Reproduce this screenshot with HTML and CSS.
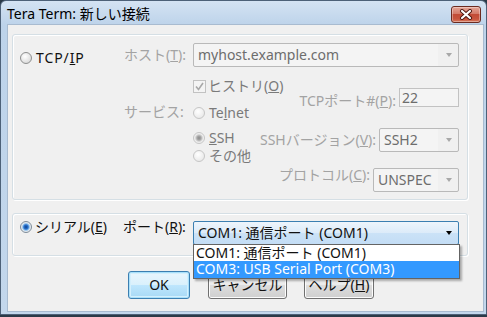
FILE: index.html
```html
<!DOCTYPE html>
<html lang="ja">
<head>
    <meta charset="UTF-8">
    <title>Tera Term: 新しい接続</title>
    <link rel="stylesheet" href="styles.css">
</head>
<body>
    <div class="window">
        <div class="titlebar">
            <span class="title">Tera Term: 新しい接続</span>
            <span class="close">
                <svg width="14" height="11" viewBox="0 0 14 11">
                    <path d="M3 2 L11 9 M11 2 L3 9" stroke="#4a1710" stroke-width="4" stroke-linecap="round"/>
                    <path d="M3 2 L11 9 M11 2 L3 9" stroke="#fff" stroke-width="2.2" stroke-linecap="round"/>
                </svg>
            </span>
        </div>

        <div class="client">
            <!-- TCP/IP -->
            <div class="group group-tcp">
                <div class="col-kind">
                    <label class="opt"><span class="radio"></span><span>TCP/<u>I</u>P</span></label>
                </div>
                <div class="col-labels">
                    <span class="lbl lbl-host">ホスト(<u>T</u>):</span>
                    <span class="lbl lbl-svc">サービス:</span>
                </div>
                <div class="col-fields">
                    <div class="combo combo-host">
                        <span>myhost.example.com</span>
                        <span class="arrow"></span>
                    </div>
                    <div class="svc-area">
                        <div class="svc-left">
                            <label class="opt dim row-hist">
                                <span class="check">
                                    <svg width="11" height="11" viewBox="0 0 11 11"><path d="M2 5.5 L4.5 8.5 L9 2" fill="none" stroke="#a8a8a8" stroke-width="1.6"/></svg>
                                </span><span>ヒストリ(<u>O</u>)</span>
                            </label>
                            <label class="opt dim row-telnet"><span class="radio off"></span><span>Te<u>l</u>net</span></label>
                            <label class="opt dim row-ssh"><span class="radio off on-gray"></span><span><u>S</u>SH</span></label>
                            <label class="opt dim row-other"><span class="radio off"></span><span>その他</span></label>
                        </div>
                        <div class="svc-right">
                            <div class="prow prow-port">
                                <span class="lbl">TCPポート#(<u>P</u>):</span>
                                <div class="field">22</div>
                            </div>
                            <div class="prow prow-ver">
                                <span class="lbl">SSHバージョン(<u>V</u>):</span>
                                <div class="combo combo-ver"><span>SSH2</span><span class="arrow"></span></div>
                            </div>
                            <div class="prow prow-proto">
                                <span class="lbl">プロトコル(<u>C</u>):</span>
                                <div class="combo combo-proto"><span>UNSPEC</span><span class="arrow"></span></div>
                            </div>
                        </div>
                    </div>
                </div>
            </div>

            <!-- シリアル -->
            <div class="group group-serial">
                <div class="serial-kind">
                    <label class="opt"><span class="radio on-blue"></span><span>シリアル(<u>E</u>)</span></label>
                </div>
                <span class="port-lbl">ポート(<u>R</u>):</span>
                <div class="combo combo-port">
                    <span>COM1: 通信ポート (COM1)</span>
                    <span class="arrow dark"></span>
                    <ul class="droplist">
                        <li>COM1: 通信ポート (COM1)</li>
                        <li class="sel">COM3: USB Serial Port (COM3)</li>
                    </ul>
                </div>
            </div>

            <div class="buttons">
                <button class="btn btn-ok">OK</button>
                <button class="btn btn-cancel">キャンセル</button>
                <button class="btn btn-help">ヘルプ(<u>H</u>)</button>
            </div>
        </div>
    </div>
</body>
</html>
```
FILE: styles.css
```css
/* general */
body {
    margin: 0;
    background: #2b3a48;
    font-family: "Noto Sans", "Noto Sans CJK JP", sans-serif;
    font-size: 14px;
    line-height: 16px;
    color: #111;
}

u {
    text-decoration: underline;
    text-underline-offset: 1px;
}

/* window frame */
.window {
    width: 487px;
    height: 315px;
    box-sizing: border-box;
    border: 1px solid #4d6178;
    border-radius: 6px 6px 0 0;
    background: linear-gradient(#d4e3f3, #bdd3ea 24px, #c3d7ec);
    padding: 0 3px 3px 7px;
    display: flex;
    flex-direction: column;
}

.titlebar {
    height: 24px;
    margin: 0 -3px 0 -7px;
    padding: 0 5px 0 6px;
    display: flex;
    align-items: center;
    justify-content: space-between;
}

.title {
    color: #000;
    padding-top: 1px;
}

.close {
    width: 30px;
    height: 17px;
    box-sizing: border-box;
    margin-top: 2px;
    border: 1px solid #6b2a20;
    border-radius: 3px;
    background: linear-gradient(#e4a597, #d47a68 45%, #c24b36 50%, #c8543d 80%, #d77c5f);
    box-shadow: inset 0 0 0 1px rgba(255, 255, 255, 0.35);
    display: flex;
    align-items: center;
    justify-content: center;
}

.client {
    flex: 1;
    background: #f0f0f0;
    box-shadow: 0 0 0 1px #a8bbd0;
    padding: 9px 0 0 4px;
}

/* group boxes */
.group {
    width: 456px;
    box-sizing: border-box;
    border: 1px solid #d5dfe5;
    border-radius: 3px;
    box-shadow: 1px 1px 0 #fff, inset 1px 1px 0 #fff;
}

.group-tcp {
    height: 166px;
    display: flex;
}

.opt {
    display: flex;
    align-items: center;
    gap: 4px;
    height: 16px;
    white-space: nowrap;
}

.dim {
    color: #7a7a7a;
}

.lbl {
    color: #a3a3a3;
    white-space: nowrap;
}

.col-kind {
    width: 111px;
    box-sizing: border-box;
    padding: 15px 0 0 7px;
}

.col-kind .opt {
    letter-spacing: 0.9px;
}

.col-labels {
    width: 69px;
    display: flex;
    flex-direction: column;
}

.lbl-host {
    margin-top: 12px;
}

.lbl-svc {
    margin-top: 41px;
}

.col-fields {
    width: 266px;
}

/* radio / check */
.radio {
    width: 12px;
    height: 12px;
    flex: none;
    box-sizing: border-box;
    border-radius: 50%;
    border: 1px solid #8e8f8f;
    background: radial-gradient(circle at 40% 35%, #ffffff, #e3e3e3 60%, #cfcfcf);
}

.radio.off {
    border-color: #c6c6c6;
    background: radial-gradient(circle at 40% 35%, #ffffff, #eeeeee 60%, #e2e2e2);
}

.radio.on-gray {
    background: radial-gradient(circle, #8a8a8a 0, #a6a6a6 2px, #cdcdcd 3.2px, #ececec 4.2px, #f6f6f6 6px);
}

.radio.on-blue {
    border-color: #7e8c99;
    background: radial-gradient(circle, #0b3e8c 0, #2b75d0 2.2px, #8dc0ec 3.3px, #dfe6ee 4.3px, #f5f5f5 6px);
}

.check {
    width: 13px;
    height: 13px;
    flex: none;
    box-sizing: border-box;
    border: 1px solid #c2c2c2;
    background: #f4f4f4;
    display: flex;
    align-items: center;
    justify-content: center;
    margin-right: -1px;
}

/* combos and fields */
.combo {
    height: 24px;
    box-sizing: border-box;
    border: 1px solid #b9b9b9;
    border-radius: 2px;
    background: linear-gradient(90deg, #f4f4f4 calc(100% - 20px), #f0f0f0 calc(100% - 20px));
    color: #6d6d6d;
    display: flex;
    align-items: center;
    justify-content: space-between;
    padding: 0 6px 0 4px;
    white-space: nowrap;
}

.combo-host {
    margin-top: 8px;
}

.arrow {
    width: 0;
    height: 0;
    border-left: 3.5px solid transparent;
    border-right: 3.5px solid transparent;
    border-top: 4px solid #a8a8a8;
}

.arrow.dark {
    border-top-color: #000;
}

.svc-area {
    display: grid;
}

.svc-left,
.svc-right {
    grid-area: 1 / 1;
    display: flex;
    flex-direction: column;
}

.svc-left {
    align-items: flex-start;
}

.row-hist {
    margin-top: 11px;
    gap: 3px;
}

.row-telnet {
    margin-top: 11px;
}

.row-ssh {
    margin-top: 9px;
}

.row-other {
    margin-top: 2px;
}

.svc-right {
    align-items: flex-end;
}

.prow {
    display: flex;
    align-items: flex-start;
    gap: 3px;
}

.prow-port {
    margin-top: 21px;
}

.prow-port .lbl {
    margin-top: 5px;
}

.prow-ver {
    margin-top: 19px;
}

.prow-ver .lbl {
    margin-top: 4px;
}

.prow-proto {
    margin-top: 16px;
}

.prow-proto .lbl {
    margin-top: -1px;
}

.field {
    width: 60px;
    height: 19px;
    box-sizing: border-box;
    border: 1px solid #c2c2c2;
    background: #f4f4f4;
    color: #6d6d6d;
    padding: 1px 0 0 2px;
}

.combo-ver {
    width: 80px;
}

.combo-proto {
    width: 86px;
}

/* serial */
.group-serial {
    height: 43px;
    margin-top: 13px;
    display: flex;
    align-items: flex-start;
}

.serial-kind {
    width: 110px;
    box-sizing: border-box;
    padding: 5px 0 0 7px;
}

.serial-kind .opt {
    gap: 3px;
}

.port-lbl {
    width: 70px;
    margin-top: 5px;
    white-space: nowrap;
}

.combo-port {
    width: 266px;
    margin-top: 7px;
    position: relative;
    color: #111;
    border-color: #3c7fb1;
    background: linear-gradient(#eef5fc, #dcebf9 50%, #cbe2f7 51%, #c3ddf5);
}

.droplist {
    position: absolute;
    left: -1px;
    top: 100%;
    width: 267px;
    box-sizing: border-box;
    margin: 0;
    padding: 0;
    list-style: none;
    background: #fff;
    border: 1px solid #646464;
    box-shadow: 2px 2px 2px rgba(0, 0, 0, 0.3);
    z-index: 2;
}

.droplist li {
    height: 16px;
    line-height: 16px;
    padding-left: 2px;
}

.droplist li.sel {
    height: 17px;
    background: #3399ff;
    color: #fff;
}

/* buttons */
.buttons {
    display: flex;
    padding-left: 116px;
    margin-top: 15px;
}

.btn {
    height: 28px;
    box-sizing: border-box;
    padding: 0;
    border: 1px solid #707070;
    border-radius: 3px;
    background: linear-gradient(#f2f2f2, #ebebeb 50%, #dddddd 51%, #cfcfcf);
    box-shadow: inset 0 0 0 1px #fcfcfc;
    font: inherit;
    color: #111;
}

.btn-ok {
    width: 62px;
    border-color: #3c7fb1;
    background: linear-gradient(#eaf6fd, #d9f0fc 50%, #bee6fd 51%, #a7d9f5);
    box-shadow: inset 0 0 0 1px #a9e0fa, inset 0 0 0 2px #d4effc;
}

.btn-cancel {
    width: 79px;
    margin-left: 18px;
}

.btn-help {
    width: 70px;
    margin-left: 17px;
}
```
